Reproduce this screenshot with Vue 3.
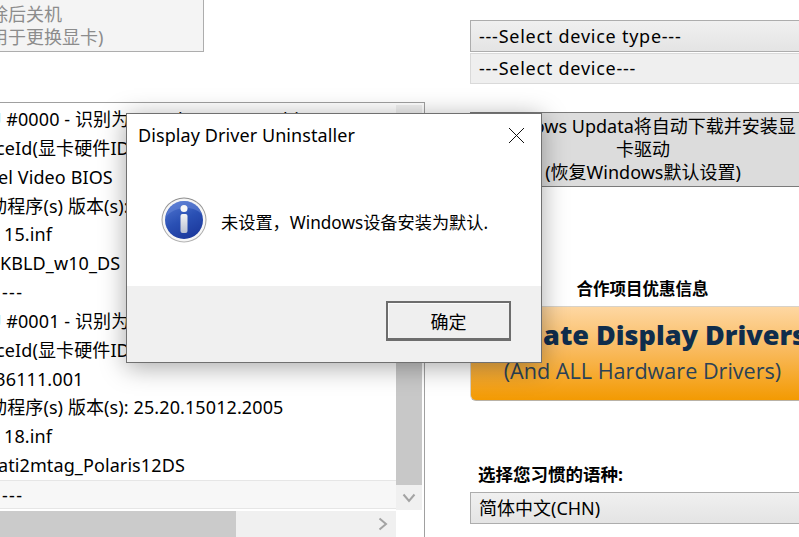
<script setup>
const rows = [
  { text: 'GPU #0000 - 识别为 : Intel(R) HD Graphics 630', shift: -36 },
  { text: 'DeviceId(显卡硬件ID): 8086:5912', shift: -41 },
  { text: 'Intel Video BIOS', shift: -26 },
  { text: '驱动程序(s) 版本(s): 25.20.100.6373', shift: -29 },
  { text: '15.inf', shift: 4 },
  { text: 'KBLD_w10_DS', shift: 0 },
  { text: '---', shift: 2, dash: true },
  { text: 'GPU #0001 - 识别为 : Radeon RX 550', shift: -36 },
  { text: 'DeviceId(显卡硬件ID): 1002:699F', shift: -41 },
  { text: '113-C9436111.001', shift: -74 },
  { text: '驱动程序(s) 版本(s): 25.20.15012.2005', shift: -29 },
  { text: '18.inf', shift: 4 },
  { text: 'ati2mtag_Polaris12DS', shift: -2 },
  { text: '---', shift: 2, dash: true, alt: true }
]
</script>

<template>
  <div class="screen">
    <section class="left">
      <div class="old-button">
        <span>驱动清除后关机</span>
        <span>(当需要时才用于更换显卡)</span>
      </div>
      <div class="log">
        <div class="log-main">
          <div class="log-rows">
            <div v-for="(row, i) in rows" :key="i" class="row" :class="{ alt: row.alt, dash: row.dash }">
              <span :style="{ marginLeft: row.shift + 'px' }">{{ row.text }}</span>
            </div>
          </div>
          <div class="hbar">
            <div class="hthumb"></div>
            <div class="htrack"></div>
            <div class="hbtn">
              <svg width="10" height="14" viewBox="0 0 10 14"><path d="M1.5 1.5 8 7l-6.500 5.500" fill="none" stroke="#a3a3a3" stroke-width="2"/></svg>
            </div>
          </div>
        </div>
        <div class="vbar">
          <div class="vtop"></div>
          <div class="vthumb"></div>
          <div class="vbtn">
            <svg width="14" height="10" viewBox="0 0 14 10"><path d="M1.500 1.500 7 8l5.500-6.500" fill="none" stroke="#a3a3a3" stroke-width="2"/></svg>
          </div>
        </div>
      </div>
    </section>

    <section class="right">
      <div class="select strong wide"><span>---Select device type---</span><i class="caret"></i></div>
      <div class="select faint wide"><span>---Select device---</span><i class="caret"></i></div>
      <div class="update">Windows Updata将自动下载并安装显<br>卡驱动<br>(恢复Windows默认设置)</div>
      <h3 class="partner">合作项目优惠信息</h3>
      <div class="banner">
        <b>Update Display Drivers</b>
        <span>(And ALL Hardware Drivers)</span>
      </div>
      <h3 class="lang">选择您习惯的语种:</h3>
      <div class="select strong last"><span>简体中文(CHN)</span><i class="caret"></i></div>
    </section>

    <div class="dialog">
      <div class="dialog-body">
        <div class="dialog-title">
          <span>Display Driver Uninstaller</span>
          <svg class="close" width="17" height="17" viewBox="0 0 17 17"><path d="M1 1l15 15M16 1 1 16" stroke="#111" stroke-width="1" fill="none"/></svg>
        </div>
        <div class="dialog-msg">
          <svg width="46" height="46" viewBox="0 0 46 46">
            <defs>
              <linearGradient id="ring" x1="0" y1="0" x2="0" y2="1">
                <stop offset="0" stop-color="#8d8d8d"/>
                <stop offset="1" stop-color="#b4b4b4"/>
              </linearGradient>
              <linearGradient id="ball" x1="0.2" y1="0" x2="0.7" y2="1">
                <stop offset="0" stop-color="#4f74cf"/>
                <stop offset="0.5" stop-color="#2a50b4"/>
                <stop offset="1" stop-color="#1b389c"/>
              </linearGradient>
              <linearGradient id="bar" x1="0" y1="0" x2="0" y2="1">
                <stop offset="0" stop-color="#f4f4f4"/>
                <stop offset="1" stop-color="#b8c0d2"/>
              </linearGradient>
            </defs>
            <circle cx="23" cy="23" r="22.500" fill="url(#ring)"/>
            <circle cx="23" cy="23" r="21.500" fill="#f6f6f6"/>
            <circle cx="23" cy="23" r="19" fill="url(#ball)"/>
            <path d="M5 20C10 11 33 6 41 18 38 8 31 4 23 4 14 4 7 10 5 20Z" fill="#6f8fdc" opacity=".45"/>
            <circle cx="23" cy="11.500" r="3.500" fill="#f7f7f7"/>
            <rect x="19.500" y="17" width="7" height="19" rx="2" fill="url(#bar)"/>
          </svg>
          <span class="msg-text">未设置，Windows设备安装为默认.</span>
        </div>
      </div>
      <div class="dialog-foot">
        <button class="ok" type="button">确定</button>
      </div>
    </div>
  </div>
</template>

<style scoped>
.screen {
  position: relative;
  display: flex;
  width: 799px;
  height: 537px;
  overflow: hidden;
  background: #fff;
  color: #000;
  font-family: "Noto Sans", "Noto Sans CJK SC", sans-serif;
  font-size: 18px;
}
.left {
  flex: none;
  width: 425px;
}
.old-button {
  display: flex;
  flex-direction: column;
  justify-content: center;
  align-items: center;
  box-sizing: border-box;
  width: 410px;
  height: 52px;
  margin-left: -206px;
  background: #f4f4f4;
  border: 1px solid #adadad;
  border-top: none;
  color: #8c8c8c;
  line-height: 23px;
  white-space: nowrap;
}
.log {
  display: flex;
  box-sizing: border-box;
  height: 440px;
  margin-top: 50px;
  border: 1px solid #a0a0a0;
  border-left: none;
  padding: 2px 2px 0 0;
  background: #fff;
}
.log-main {
  flex: 1;
  min-width: 0;
  display: flex;
  flex-direction: column;
}
.log-rows {
  height: 406px;
  overflow: hidden;
  letter-spacing: 0.1px;
}
.row {
  box-sizing: border-box;
  height: 28.85px;
  line-height: 28px;
  white-space: nowrap;
}
.row span {
  display: inline-block;
}
.row.dash {
  letter-spacing: 1.300px;
}
.row.alt {
  background: #f7f7f7;
  border-top: 1px solid #e6e6e6;
  border-bottom: 1px solid #e6e6e6;
}
.hbar {
  display: flex;
  height: 26px;
  background: #f0f0f0;
}
.hthumb {
  width: 236px;
  background: #cbcbcb;
}
.htrack {
  flex: 1;
}
.hbtn {
  display: flex;
  align-items: center;
  justify-content: center;
  width: 26px;
}
.vbar {
  display: flex;
  flex-direction: column;
  flex: none;
  width: 26px;
  height: 405px;
  background: #f0f0f0;
}
.vtop {
  height: 25px;
}
.vthumb {
  flex: 1;
  background: #c8c8c8;
}
.vbtn {
  display: flex;
  align-items: center;
  justify-content: center;
  height: 25px;
}
.right {
  flex: none;
  width: 345px;
  margin-left: 45px;
  padding-top: 20px;
}
.select {
  display: flex;
  align-items: center;
  justify-content: space-between;
  box-sizing: border-box;
  height: 32px;
  padding: 0 8px;
  white-space: nowrap;
  border: 1px solid #adadad;
  background: linear-gradient(#f0f0f0, #e4e4e4);
}
.select.wide span {
  letter-spacing: 0.750px;
}
.select.faint {
  height: 31px;
  margin-top: 1px;
  padding-bottom: 2px;
  border-color: #d9d9d9;
  background: #efefef;
}
.select.last {
  padding-bottom: 3px;
}
.caret {
  width: 8px;
  height: 8px;
  margin-right: -4px;
  border-right: 1.500px solid #666;
  border-bottom: 1.500px solid #666;
  transform: rotate(45deg) translate(-2px, -2px);
}
.update {
  box-sizing: border-box;
  height: 75px;
  margin-top: 28px;
  border: 1px solid #7a7a7a;
  border-right: none;
  background: #dcdcdc;
  text-align: center;
  line-height: 23px;
  white-space: nowrap;
  padding-top: 2px;
}
.partner {
  margin: 90px 0 0;
  height: 29px;
  font-size: 16.500px;
  line-height: 24px;
  font-weight: 700;
  text-align: center;
}
.banner {
  display: flex;
  flex-direction: column;
  align-items: center;
  box-sizing: border-box;
  height: 95px;
  overflow: hidden;
  border: 1px solid #d8d2c8;
  border-bottom-color: #b9b2a6;
  border-radius: 3px 0 0 6px;
  background: linear-gradient(#fed7a2, #f9bb60 45%, #f39a02);
  white-space: nowrap;
}
.banner b {
  margin-top: 7px;
  padding-left: 9px;
  font-family: "Open Sans", sans-serif;
  font-size: 27px;
  line-height: 42px;
  font-weight: 800;
  color: #0f2d4c;
}
.banner span {
  font-family: "Open Sans", sans-serif;
  font-size: 21.600px;
  line-height: 30px;
  color: #2b4257;
}
.lang {
  margin: 60px 0 0;
  padding-left: 8px;
  height: 31px;
  font-size: 17.500px;
  line-height: 26px;
  font-weight: 700;
}
.dialog {
  position: absolute;
  left: 126px;
  top: 113px;
  box-sizing: border-box;
  width: 416px;
  height: 250px;
  display: flex;
  flex-direction: column;
  background: #fff;
  border: 1px solid #707070;
  box-shadow: 0 4px 24px rgba(0, 0, 0, 0.35);
}
.dialog-body {
  flex: 1;
}
.dialog-title {
  display: flex;
  align-items: center;
  justify-content: space-between;
  height: 42px;
  padding: 0 16px 0 11px;
  letter-spacing: 0.080px;
}
.dialog-msg {
  display: flex;
  align-items: center;
  gap: 14px;
  margin: 41px 0 0 34px;
}
.msg-text {
  font-size: 17.200px;
  padding-top: 2px;
}
.dialog-foot {
  flex: none;
  display: flex;
  justify-content: flex-end;
  align-items: flex-start;
  height: 76px;
  padding: 15px 30px 0 0;
  background: #f0f0f0;
  box-sizing: border-box;
}
.ok {
  width: 125px;
  height: 40px;
  padding: 0;
  font: inherit;
  color: #000;
  background: #efefef;
  border: 2px solid #6d6d6d;
  border-bottom-width: 3px;
  box-shadow: inset 1px 1px 0 #fafafa;
}
</style>
